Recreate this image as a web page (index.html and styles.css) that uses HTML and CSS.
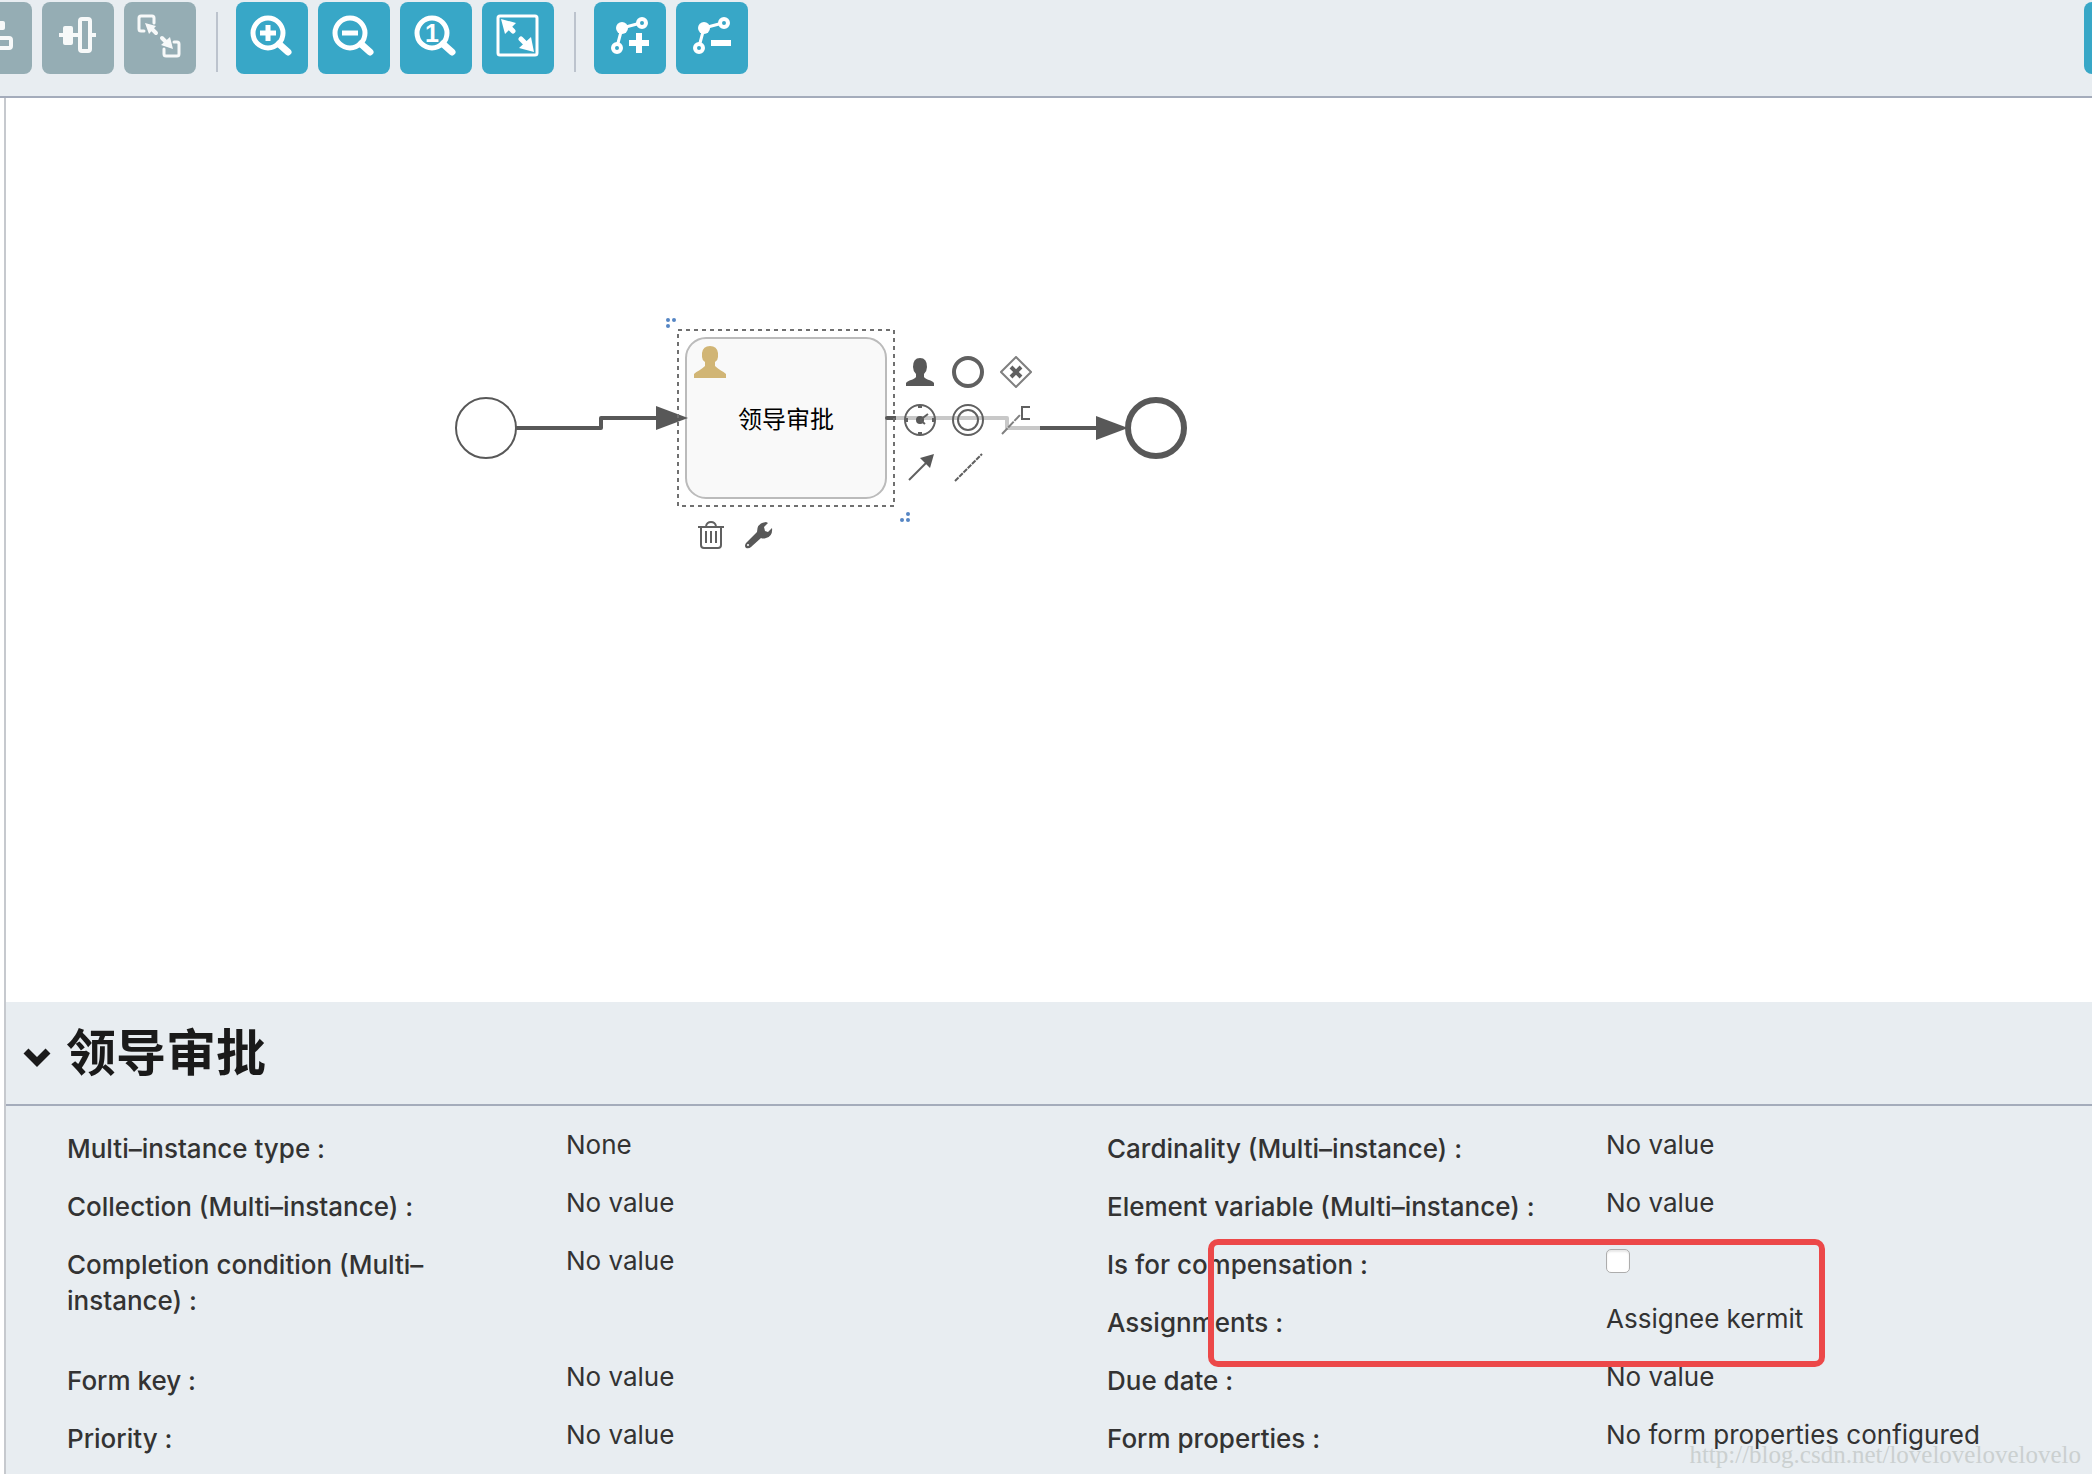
FILE: index.html
```html
<!DOCTYPE html>
<html lang="zh-CN">
<head>
<meta charset="utf-8">
<title>领导审批</title>
<link rel="stylesheet" href="styles.css">
</head>
<body>
<header class="toolbar">
  <div class="tools">
    <button class="tool" disabled aria-label="Align vertical">
      <svg viewBox="0 0 72 72"><rect x="28" y="19" width="17" height="9" rx="2" class="fill"/><rect x="21" y="36" width="30" height="10" rx="2" class="line w4"/><path d="M36 14v5M36 28v7M36 48v5" class="line w4"/></svg>
    </button>
    <button class="tool" disabled aria-label="Align horizontal">
      <svg viewBox="0 0 72 72"><rect x="21" y="24" width="10" height="19" rx="2" class="fill"/><rect x="38" y="17" width="10" height="32" rx="2" class="line w4"/><path d="M17 33h20M50 33h4" class="line w4 butt"/></svg>
    </button>
    <button class="tool" disabled aria-label="Same size">
      <svg viewBox="0 0 72 72"><path d="M20 29h-3q-2 0-2-2V16q0-2 2-2h11q2 0 2 2v5M50 40h3q2 0 2 2v10q0 2-2 2H42q-2 0-2-2v-5" class="line w3"/><path d="M32 31l-6-6M38 36l6 6" class="line w4"/><path d="M21 21l11 3-7 8zM49 47l-12-4 9-8z" class="fill"/></svg>
    </button>
    <span class="divider"></span>
    <button class="tool" aria-label="Zoom in">
      <svg viewBox="0 0 72 72"><circle cx="32" cy="31" r="15" class="line w5"/><path d="M43 42l9 8" class="line w7"/><path d="M24 31h16M32 23v16" class="line w5 butt"/></svg>
    </button>
    <button class="tool" aria-label="Zoom out">
      <svg viewBox="0 0 72 72"><circle cx="32" cy="31" r="15" class="line w5"/><path d="M43 42l9 8" class="line w7"/><path d="M24 31h16" class="line w5 butt"/></svg>
    </button>
    <button class="tool" aria-label="Zoom to actual size">
      <svg viewBox="0 0 72 72"><circle cx="32" cy="31" r="15" class="line w5"/><path d="M43 42l9 8" class="line w7"/><text x="32" y="40" class="numeral">1</text></svg>
    </button>
    <button class="tool" aria-label="Zoom to fit">
      <svg viewBox="0 0 72 72"><rect x="16" y="14" width="39" height="39" rx="2" class="line w3"/><path d="M26 24l5 5M39 37l6 6" class="line w5"/><path d="M19 17l15 4-11 11zM52 50l-15-4 12-11z" class="fill"/></svg>
    </button>
    <span class="divider"></span>
    <button class="tool" aria-label="Add bend point">
      <svg viewBox="0 0 72 72"><path d="M43 22l-15 4-4 15" class="line w3"/><circle cx="48" cy="21" r="4" class="line w4"/><circle cx="23" cy="46" r="4" class="line w4"/><circle cx="28" cy="26" r="6" class="fill"/><path d="M35 41h20M45 31v20" class="line w6 butt"/></svg>
    </button>
    <button class="tool" aria-label="Remove bend point">
      <svg viewBox="0 0 72 72"><path d="M43 22l-15 4-4 15" class="line w3"/><circle cx="48" cy="21" r="4" class="line w4"/><circle cx="23" cy="46" r="4" class="line w4"/><circle cx="28" cy="26" r="6" class="fill"/><path d="M35 41h20" class="line w6 butt"/></svg>
    </button>
  </div>
  <button class="tool tool-end" aria-label="Close editor"></button>
</header>

<main class="editor">
  <section class="canvas" aria-label="Process canvas">
    <svg class="diagram" width="1300" height="904" viewBox="6 98 1300 904">
      <circle cx="486" cy="428" r="30" class="start"/>
      <rect x="686" y="338" width="200" height="160" rx="20" class="task"/>
      <path d="M517 428h84v-10h60" class="flow"/>
      <path d="M656 406l32 12-32 12z" class="head"/>
      <path d="M887 418h120v10h92" class="flow"/>
      <path d="M1096 416l32 12-32 12z" class="head"/>
      <circle cx="1156" cy="428" r="28" class="end"/>
      <path d="M694 378v-4c3-3 7-4 11-8V362q-3-2-3-5v-4q1-7 8-7t8 7v4q0 3-3 5v4c4 4 8 5 11 8v4z" class="person"/>
      <text x="786" y="428" class="task-name">领导审批</text>
      <rect x="678" y="330" width="216" height="176" class="selection"/>
      <g class="handle"><circle cx="668" cy="320" r="2"/><circle cx="674" cy="320" r="2"/><circle cx="668" cy="326" r="2"/><circle cx="908" cy="514" r="2"/><circle cx="902" cy="520" r="2"/><circle cx="908" cy="520" r="2"/></g>
    </svg>
    <div class="next-menu">
      <button class="mini" aria-label="User task"><svg viewBox="0 0 32 32"><path d="M2 30v-3c2-3 8-3 10-6v-3q-3-3-3-7 0-9 7-9t7 9q0 4-3 7v3c2 3 8 3 10 6v3z" class="dark"/></svg></button>
      <button class="mini" aria-label="End event"><svg viewBox="0 0 32 32"><circle cx="16" cy="16" r="14" class="stroke s4"/></svg></button>
      <button class="mini" aria-label="Exclusive gateway"><svg viewBox="0 0 32 32"><path d="M16 1l15 15-15 15L1 16z" class="stroke s2 pale"/><path d="M11 11l10 10M21 11l-10 10" class="stroke s4"/></svg></button>
      <button class="mini" aria-label="Timer event"><svg viewBox="0 0 32 32"><circle cx="16" cy="16" r="15" class="stroke s2"/><path d="M16 1v3M16 28v3M1 16h3M28 16h3" class="stroke s4"/><circle cx="16" cy="16" r="4" class="dark"/><path d="M16 16l8-6M16 16l5 4" class="stroke s2"/></svg></button>
      <button class="mini" aria-label="Intermediate event"><svg viewBox="0 0 32 32"><circle cx="16" cy="16" r="15" class="stroke s2"/><circle cx="16" cy="16" r="10" class="stroke s2"/></svg></button>
      <button class="mini" aria-label="Text annotation"><svg viewBox="0 0 32 32"><path d="M2 30l18-19" class="stroke s2 pale" stroke-dasharray="8 1"/><path d="M30 3h-8v12h8" class="stroke s2"/></svg></button>
      <button class="mini" aria-label="Sequence flow"><svg viewBox="0 0 32 32"><path d="M5 28l17-17" class="stroke s2"/><path d="M30 2l-4 14L16 6z" class="dark"/></svg></button>
      <button class="mini" aria-label="Association"><svg viewBox="0 0 32 32"><path d="M3 29L30 2" class="stroke s2" stroke-dasharray="5 1"/></svg></button>
    </div>
    <div class="edit-menu">
      <button class="mini" aria-label="Delete"><svg viewBox="0 0 32 32"><path d="M3 8h26M11 7q1-4 5-4t5 4M6 8v18q0 3 3 3h14q3 0 3-3V8M11 12v12M16 12v12M21 12v12" class="stroke s2"/></svg></button>
      <button class="mini" aria-label="Change type"><svg viewBox="0 0 32 32"><path d="M3 24L14 13q0-9 9-10l2 1-4 4 1 4 3 1 4-4q1 8-6 10-3 1-5 0L8 28q-2 2-5 1-2-2 0-5z" class="dark"/><circle cx="5" cy="26" r="1" fill="#fff"/></svg></button>
    </div>
  </section>

  <section class="panel">
    <div class="panel-head">
      <button class="toggle" aria-label="Collapse properties"><svg viewBox="0 0 28 20"><path d="M3 4l11 11L25 4" fill="none" stroke="#1a1a1a" stroke-width="7"/></svg></button>
      <h1>领导审批</h1>
    </div>
    <dl class="fields">
      <div class="field"><dt>Multi–instance type :</dt><dd>None</dd></div>
      <div class="field"><dt>Cardinality (Multi–instance) :</dt><dd>No value</dd></div>
      <div class="field"><dt>Collection (Multi–instance) :</dt><dd>No value</dd></div>
      <div class="field"><dt>Element variable (Multi–instance) :</dt><dd>No value</dd></div>
      <div class="field tall"><dt>Completion condition (Multi–instance) :</dt><dd>No value</dd></div>
      <div class="field"><dt><label for="compensation">Is for compensation :</label></dt><dd><input type="checkbox" id="compensation"></dd></div>
      <div class="field"><dt>Assignments :</dt><dd>Assignee kermit</dd></div>
      <div class="field"><dt>Form key :</dt><dd>No value</dd></div>
      <div class="field"><dt>Due date :</dt><dd>No value</dd></div>
      <div class="field"><dt>Priority :</dt><dd>No value</dd></div>
      <div class="field"><dt>Form properties :</dt><dd>No form properties configured</dd></div>
    </dl>
    <div class="highlight"></div>
    <div class="watermark">http://blog.csdn.net/lovelovelovelovelo</div>
  </section>
</main>
</body>
</html>
```
FILE: styles.css
```css
* { box-sizing: border-box; }

body {
  margin: 0;
  min-height: 100vh;
  display: flex;
  flex-direction: column;
  background: #fff;
  color: #333;
  font-family: Inter, "Noto Sans CJK SC", sans-serif;
  font-size: 26px;
  line-height: 36px;
}

button {
  padding: 0;
  border: 0;
  background: none;
}

button svg { display: block; }

/* Toolbar */
.toolbar {
  display: flex;
  justify-content: space-between;
  height: 98px;
  padding-top: 2px;
  overflow: hidden;
  background: #e8edf1;
  border-bottom: 2px solid #a4acbb;
}

.tools {
  display: flex;
  gap: 10px;
  margin-left: -40px;
}

.tool {
  flex: none;
  width: 72px;
  height: 72px;
  border-radius: 8px;
  background: #38a7c7;
}

.tool:disabled { background: #95adb4; }
.tool:disabled svg { opacity: .93; }
.tool-end { margin-right: -64px; }

.divider {
  width: 2px;
  height: 60px;
  margin: 10px 8px 0 10px;
  background: #bcc3cd;
}

.fill { fill: #fff; }
.line { fill: none; stroke: #fff; stroke-linecap: round; stroke-linejoin: round; }
.butt { stroke-linecap: butt; }
.w3 { stroke-width: 3; }
.w4 { stroke-width: 4; }
.w5 { stroke-width: 5; }
.w6 { stroke-width: 6; }
.w7 { stroke-width: 7; }
.numeral { fill: #fff; font: bold 25px "Liberation Sans", sans-serif; text-anchor: middle; }

/* Canvas */
.editor {
  flex: 1;
  display: flex;
  flex-direction: column;
  margin-left: 4px;
  border-left: 2px solid #c6c9ce;
}

.canvas {
  position: relative;
  flex: 1;
  overflow: hidden;
}

.diagram { display: block; }
.start { fill: #fff; stroke: #585858; stroke-width: 2; }
.end { fill: #fff; stroke: #585858; stroke-width: 6; }
.task { fill: #f9f9f9; stroke: #bbb; stroke-width: 2; }
.flow { fill: none; stroke: #585858; stroke-width: 4; stroke-linejoin: round; stroke-linecap: round; }
.head { fill: #585858; }
.person { fill: #d1b575; }
.task-name { fill: #000; font: 24px "Noto Sans CJK SC", sans-serif; text-anchor: middle; }
.selection { fill: none; stroke: #707070; stroke-width: 2; stroke-dasharray: 4 4; }
.handle { fill: #5686c4; }

.next-menu {
  position: absolute;
  left: 890px;
  top: 250px;
  display: grid;
  grid-template-columns: repeat(3, 48px);
  background: rgba(255, 255, 255, .67);
}

.edit-menu {
  position: absolute;
  left: 681px;
  top: 413px;
  display: flex;
}

.mini {
  width: 48px;
  height: 48px;
  padding: 8px;
}

.dark { fill: #585858; }
.stroke { fill: none; stroke: #606060; }
.pale { stroke: #808080; }
.s2 { stroke-width: 2; }
.s4 { stroke-width: 4; }

/* Properties */
.panel {
  position: relative;
  background: #e8edf1;
}

.panel-head {
  display: flex;
  align-items: center;
  gap: 15px;
  height: 104px;
  padding-left: 17px;
  border-bottom: 2px solid #a4acbb;
}

.toggle { width: 28px; margin-top: 8px; }

h1 {
  margin: 0;
  color: #1a1a1a;
  font-size: 50px;
  line-height: 72px;
  font-weight: 700;
}

.fields {
  display: grid;
  grid-template-columns: 499fr 541fr 499fr 486fr;
  grid-auto-rows: 58px;
  margin: 0 0 -1px;
  padding: 21px 0 0 61px;
}

.field {
  display: grid;
  grid-template-columns: subgrid;
  grid-column: span 2;
}

.tall { grid-row: span 2; }

dt {
  padding: 4px 60px 0 0;
  font-weight: 500;
}

dd { margin: 0; }

input[type="checkbox"] {
  appearance: none;
  display: block;
  width: 24px;
  height: 24px;
  margin: 6px 0;
  border: 1px solid #adadad;
  border-radius: 5px;
  background: #fff;
  box-shadow: inset 0 2px 2px #e8e8e8;
}

.highlight {
  position: absolute;
  left: 1202px;
  top: 237px;
  width: 617px;
  height: 128px;
  border: 6px solid #ec4849;
  border-radius: 10px;
}

.watermark {
  position: absolute;
  right: 11px;
  bottom: 1px;
  color: #cbd0d0;
  font-family: "Liberation Serif", serif;
  font-size: 25px;
}
```
